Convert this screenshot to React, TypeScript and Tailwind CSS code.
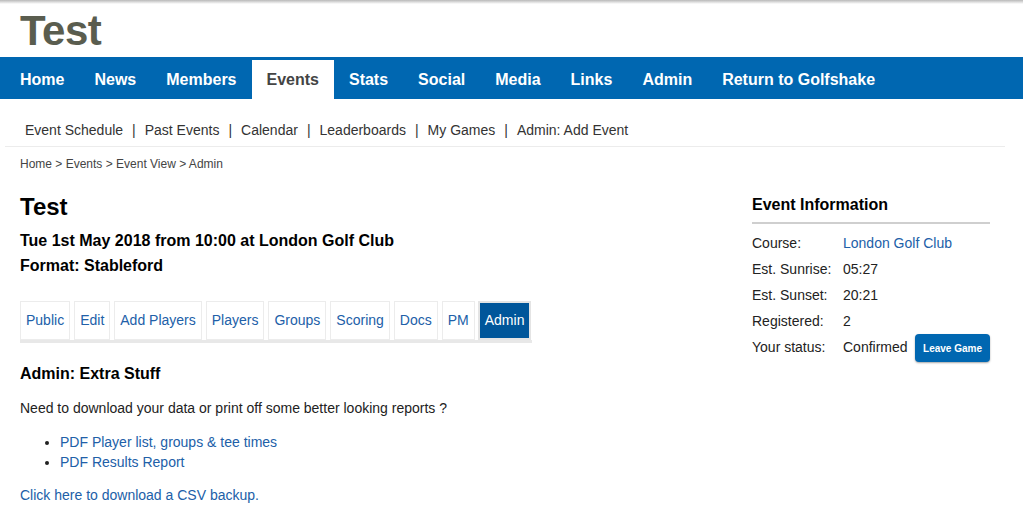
const navItems = [
  "Home",
  "News",
  "Members",
  "Events",
  "Stats",
  "Social",
  "Media",
  "Links",
  "Admin",
  "Return to Golfshake",
];

const subNav = [
  "Event Schedule",
  "Past Events",
  "Calendar",
  "Leaderboards",
  "My Games",
  "Admin: Add Event",
];

const tabs = [
  "Public",
  "Edit",
  "Add Players",
  "Players",
  "Groups",
  "Scoring",
  "Docs",
  "PM",
  "Admin",
];

const info = [
  { label: "Course:", value: "London Golf Club", link: true },
  { label: "Est. Sunrise:", value: "05:27" },
  { label: "Est. Sunset:", value: "20:21" },
  { label: "Registered:", value: "2" },
];

const App = () => {
  return (
    <div className="relative min-h-[528px] w-[1023px] bg-white font-['Liberation_Sans',Arial,sans-serif] text-[#222]">
      {/* TOP SHADOW */}
      <div className="absolute left-0 top-0 h-[4px] w-full bg-gradient-to-b from-[#b9b9b9] to-white" />

      {/* HEADER */}
      <div className="h-[57px] pl-[20px] pt-[10px]">
        <h1 className="text-[42px] font-bold leading-[42px] tracking-[-0.5px] text-[#5a5d4f]">
          Test
        </h1>
      </div>

      {/* MAIN NAV */}
      <nav className="flex h-[42px] bg-[#0067b1] pl-[5px]">
        {navItems.map((item) =>
          item === "Events" ? (
            <div
              key={item}
              className="mt-[3px] flex h-[39px] items-center bg-white px-[15px] text-[16px] font-bold text-[#444]"
            >
              {item}
            </div>
          ) : (
            <div
              key={item}
              className="mt-[3px] flex h-[39px] items-center px-[15px] text-[16px] font-bold text-white"
            >
              {item}
            </div>
          )
        )}
      </nav>

      {/* SUB NAV */}
      <div className="mx-[5px] flex w-[1000px] border-b border-[#ececec] pb-[6px] pl-[20px] pt-[21px] text-[14px] leading-[20px] text-[#333]">
        {subNav.map((item, i) => (
          <span key={item} className="flex">
            {i > 0 && <span className="mx-[9px]">|</span>}
            {item}
          </span>
        ))}
      </div>

      {/* BREADCRUMB */}
      <div className="mt-[9px] pl-[20px] text-[12px] leading-[16px] text-[#444]">
        Home &gt; Events &gt; Event View &gt; Admin
      </div>

      <div className="flex pl-[20px] pr-[33px]">
        {/* LEFT COLUMN */}
        <div className="flex-1 pt-[21px]">
          <h2 className="text-[24px] font-bold leading-[28px] text-black">
            Test
          </h2>
          <div className="mt-[7px] text-[16px] font-bold leading-[25px] text-black">
            <p>Tue 1st May 2018 from 10:00 at London Golf Club</p>
            <p>Format: Stableford</p>
          </div>

          {/* TABS */}
          <div className="mt-[23px] inline-flex gap-[4px] border-b-[3px] border-[#e8e8e8] pr-[1px]">
            {tabs.map((tab) =>
              tab === "Admin" ? (
                <div
                  key={tab}
                  className="-ml-[1px] flex h-[39px] items-center border-2 border-[#e4e4e4] bg-[#00569a] px-[5px] text-[14px] text-white"
                >
                  {tab}
                </div>
              ) : (
                <div
                  key={tab}
                  className="flex h-[39px] items-center border border-[#ececec] bg-white px-[5px] text-[14px] text-[#2160a8]"
                >
                  {tab}
                </div>
              )
            )}
          </div>

          {/* ADMIN EXTRA */}
          <h3 className="mt-[21px] text-[16px] font-bold leading-[20px] text-black">
            Admin: Extra Stuff
          </h3>
          <p className="mt-[14px] text-[14px] leading-[20px]">
            Need to download your data or print off some better looking reports ?
          </p>
          <ul className="mt-[14px] list-disc pl-[40px] text-[14px] leading-[20px] text-[#2160a8] marker:text-[#222]">
            <li>PDF Player list, groups &amp; tee times</li>
            <li>PDF Results Report</li>
          </ul>
          <p className="mt-[13px] text-[14px] leading-[20px] text-[#2160a8]">
            Click here to download a CSV backup.
          </p>
        </div>

        {/* RIGHT COLUMN */}
        <div className="w-[238px] pt-[23px]">
          <h3 className="border-b-2 border-[#cfcfcf] pb-[7px] text-[16px] font-bold leading-[20px] text-black">
            Event Information
          </h3>
          <div className="mt-[6px] text-[14px]">
            {info.map((row) => (
              <div key={row.label} className="flex h-[26px] items-center">
                <span className="w-[91px]">{row.label}</span>
                <span className={row.link ? "text-[#2160a8]" : ""}>
                  {row.value}
                </span>
              </div>
            ))}
            <div className="flex h-[26px] items-center">
              <span className="w-[91px]">Your status:</span>
              <span>Confirmed</span>
              <button className="ml-auto mt-[2px] flex h-[28px] w-[75px] items-center justify-center rounded-[4px] bg-[#0067b1] text-[10px] font-bold text-white shadow-[0_1px_2px_rgba(0,0,0,0.35)]">
                Leave Game
              </button>
            </div>
          </div>
        </div>
      </div>
    </div>
  );
};

export default App;
